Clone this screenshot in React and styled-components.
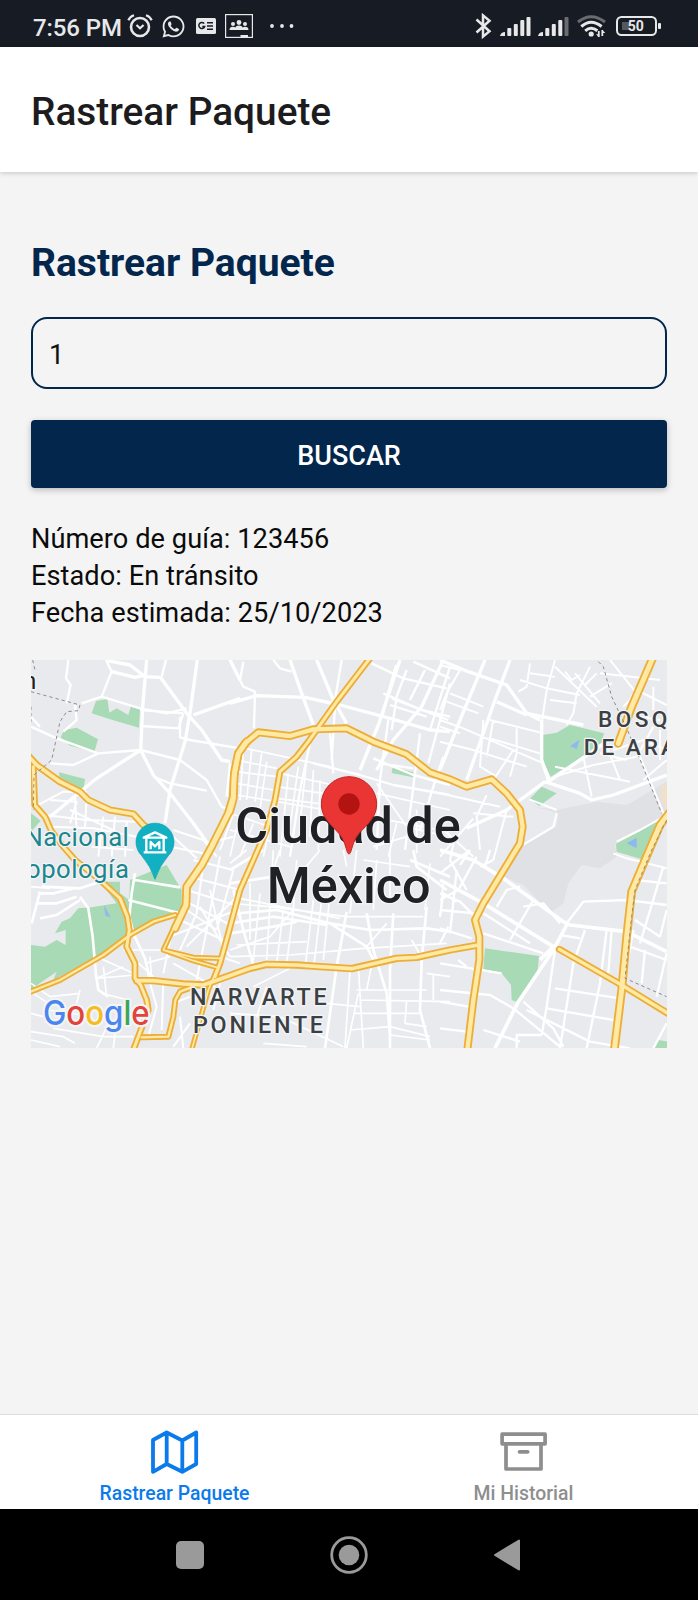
import React from 'react';
import styled, { createGlobalStyle } from 'styled-components';
import { FaWhatsapp } from 'react-icons/fa';

const GlobalStyle = createGlobalStyle`
  *, *::before, *::after { box-sizing: border-box; }
  body { margin: 0; background: #f4f4f4; font-family: Roboto, "Liberation Sans", sans-serif; }
`;

const Screen = styled.div`
  display: flex;
  flex-direction: column;
  width: 698px;
  height: 1600px;
  overflow: hidden;
  background: #f4f4f4;
`;

const StatusBar = styled.div`
  flex: none;
  display: flex;
  justify-content: space-between;
  height: 47px;
  padding: 5px 37px 0 33px;
  background: #171b23;
  color: #e6e8ea;
`;

const StatusGroup = styled.div`
  display: flex;
  align-items: center;
  height: 42px;
`;

const StatusItem = styled.div`
  display: flex;
  flex: none;
  margin-left: ${(p) => p.$gap || 0}px;
  svg { display: block; }
`;

const Clock = styled.span`
  width: 90px;
  font-size: 24px;
  letter-spacing: -0.1px;
  font-weight: 500;
  line-height: 42px;
  white-space: nowrap;
  padding-top: 3px;
`;

const Header = styled.header`
  flex: none;
  display: flex;
  align-items: center;
  height: 125px;
  padding: 5px 31px 0;
  background: #fff;
  box-shadow: 0 1px 5px rgba(0, 0, 0, 0.2);
`;

const HeaderTitle = styled.h1`
  margin: 0;
  font-size: 38.8px;
  font-weight: 500;
  line-height: 46px;
  color: #1c1c1e;
`;

const Content = styled.main`
  flex: 1;
  display: flex;
  flex-direction: column;
  padding: 68px 31px 0;
`;

const SectionTitle = styled.h2`
  margin: 0 0 31px;
  font-size: 39px;
  font-weight: 700;
  line-height: 46px;
  color: #03264c;
`;

const Input = styled.input`
  height: 72px;
  padding: 4px 16px 0;
  border: 2px solid #03264c;
  border-radius: 16px;
  outline: none;
  background: transparent;
  color: #111;
  font: 400 27px Roboto, sans-serif;
`;

const SearchButton = styled.button`
  height: 68px;
  margin-top: 31px;
  padding: 3px 0 0;
  border: 0;
  border-radius: 4px;
  background: #03264c;
  color: #fff;
  font: 500 27px Roboto, sans-serif;
  box-shadow: 0 2px 6px rgba(0, 0, 0, 0.24);
`;

const Details = styled.div`
  margin: 33px 0 29px;
`;

const Detail = styled.p`
  margin: 0;
  font-size: 27.2px;
  letter-spacing: 0.05px;
  line-height: 36.8px;
  color: #0b0b0b;
`;

const MapCard = styled.div`
  width: 636px;
  height: 388px;
  overflow: hidden;
  background: #e8eaed;
  svg { display: block; }
`;

const TabBar = styled.nav`
  flex: none;
  display: flex;
  height: 95px;
  border-top: 1px solid #dedede;
  background: #fff;
`;

const Tab = styled.div`
  flex: 1;
  display: flex;
  flex-direction: column;
  align-items: center;
  padding-top: 15px;
  color: ${(p) => (p.$active ? '#0b7aeb' : '#8e8e8f')};
  svg { display: block; }
`;

const TabLabel = styled.span`
  margin-top: 8px;
  font-size: 19.4px;
  font-weight: 500;
  line-height: 24px;
`;

const NavBar = styled.div`
  flex: none;
  display: grid;
  grid-template-columns: 28px 38px 28px;
  justify-content: center;
  align-items: center;
  column-gap: 126px;
  height: 91px;
  background: #000;
  svg { display: block; }
`;

const AlarmIcon = () => (
  <svg width="26" height="24" viewBox="0 0 26 24" fill="none" stroke="currentColor">
    <circle cx="13" cy="13" r="9" strokeWidth="2.6" />
    <path d="M9.5 11l3.5 3.2 3.6-3.2" strokeWidth="2.2" />
    <path d="M1.3 6.3Q3 2.5 7 1.3M24.7 6.3Q23 2.5 19 1.3" strokeWidth="2.2" />
  </svg>
);

const NewsIcon = () => (
  <svg width="20" height="16" viewBox="0 0 20 16">
    <rect width="20" height="16" rx="1.5" fill="currentColor" />
    <path d="M8.2 5.6A3 3 0 1 0 8.7 8.4H6.3" fill="none" stroke="#171b23" strokeWidth="1.5" />
    <path d="M11 4.8h6M11 8h6M11 11.2h6" stroke="#171b23" strokeWidth="1.4" />
  </svg>
);

const MeetingIcon = () => (
  <svg width="28" height="24" viewBox="0 0 28 24" fill="currentColor">
    <rect x=".6" y=".6" width="26.8" height="22.8" fill="none" stroke="currentColor" strokeWidth="1.2" />
    <circle cx="8" cy="10" r="2" /><circle cx="14" cy="8.5" r="2.4" /><circle cx="20" cy="10" r="2" />
    <path d="M4.5 16q0-3.3 3.6-3.3 1.5 0 2 .7 1.1-1.8 3.9-1.8t3.9 1.8q.6-.7 2-.7 3.6 0 3.6 3.3zM15.5 21h7.5v2h-7.5z" />
  </svg>
);

const DotsIcon = () => (
  <svg width="26" height="6" viewBox="0 0 26 6" fill="currentColor">
    <circle cx="3" cy="3" r="1.9" /><circle cx="13" cy="3" r="1.9" /><circle cx="22.5" cy="3" r="1.9" />
  </svg>
);

const BluetoothIcon = () => (
  <svg width="17" height="26" viewBox="0 0 17 26" fill="none" stroke="currentColor" strokeWidth="2.5">
    <path d="M1.5 6.5L14.5 18.3 8 23.6V2.4l6.5 5.3L1.5 19.5" />
  </svg>
);

const SignalIcon = ({ weak }) => (
  <svg width="31" height="21" viewBox="0 0 31 21" fill="currentColor">
    <path d="M0 20q1-4 5-4v4z" />
    <rect x="7.3" y="12" width="4" height="8" rx="1" />
    <rect x="13.8" y="8" width="4" height="12" rx="1" />
    <rect x="20.3" y="4" width="4" height="16" rx="1" />
    <rect x="26.5" y="1" width="4" height="19" rx="1" opacity={weak ? 0.4 : 1} />
  </svg>
);

const WifiIcon = () => (
  <svg width="29" height="23" viewBox="0 0 29 23" fill="none" stroke="currentColor">
    <path d="M1 7Q14 -3.5 28 7" strokeWidth="3" opacity=".4" />
    <path d="M4.3 11.5Q14 3 24.6 11.5" strokeWidth="3" />
    <path d="M8.2 15.8Q14 10.8 20.4 15.8" strokeWidth="3" />
    <circle cx="14.2" cy="19" r="2.6" fill="currentColor" stroke="none" />
    <path d="M21.8 16v6M25.3 15v6" strokeWidth="1.8" />
    <path d="M19 19.2l2.8 3v-3zM25.3 18v-3l3 3z" fill="currentColor" stroke="none" />
  </svg>
);

const BatteryIcon = () => (
  <svg width="45" height="20" viewBox="0 0 45 20">
    <rect x="1" y="1" width="39" height="18" rx="4.5" fill="none" stroke="currentColor" strokeWidth="2" />
    <rect x="42" y="7" width="3" height="6" rx="1" fill="currentColor" />
    <rect x="6" y="6" width="8" height="8" fill="currentColor" opacity=".3" />
    <text x="19.8" y="15" textAnchor="middle" fontFamily="Roboto" fontWeight="700" fontSize="14" fill="currentColor">50</text>
  </svg>
);

const MapIcon = () => (
  <svg width="48" height="44" viewBox="0 0 48 44" fill="none" stroke="currentColor" strokeWidth="3.8" strokeLinejoin="round">
    <path d="M2 10L15.7 2.5 31.3 10.5 45.2 2.5V34L31.3 41.8 15.7 34 2 41.8zM15.7 2.5V34M31.3 10.5v31.3" />
  </svg>
);

const ArchiveIcon = () => (
  <svg width="48" height="44" viewBox="0 0 48 44" fill="none" stroke="currentColor" strokeWidth="3.7" strokeLinejoin="round">
    <path d="M2.1 4.2h43v9.6h-43zM6 13.8v25.2h35V13.8" />
    <path d="M19.5 21.8h8.2" strokeLinecap="round" />
  </svg>
);

/* Each sector holds its own local coordinates; `at` is its offset on the map. */
const NW = [-33, -30];
const SW = [-33, 570];
const N = [597, -30];
const S = [597, 570];
const NE = [1227, -30];
const SE = [1227, 570];

const place = (at) => `translate(${at[0]} ${at[1]})`;

const areas = [
  { at: NW, fill: '#a7dab5', d: 'M215 190L228 153 262 147 268 188 290 175 325 195 333 168 360 175 357 233 285 212zM122 262L133 240 170 233 234 268 223 306 150 287zM117 367L195 387 190 422 120 392zM33 490L62 512 33 545z' },
  { at: SW, fill: '#a7dab5', d: 'M33 285L75 290 110 270 137 285 137 240 105 250 125 215 150 205 175 175 215 172 290 160 240 95 300 95 300 130 328 150 330 90 440 45 485 120 485 185 350 250 230 320 100 390 110 365 33 418z' },
  { at: SW, fill: '#91b9f0', d: 'M252 165L272 202 256 197z' },
  { at: N, fill: '#a7dab5', d: 'M488 350L550 367 549 382 485 369z' },
  { at: NE, fill: '#e0e1e5', d: 'M280 470L350 480 470 455 560 465 680 395 680 490 525 585 530 620 480 655 425 645 385 700 370 760 330 790 250 705 190 680 245 590 350 530 355 488z' },
  { at: NE, fill: '#a7dab5', d: 'M307 255L350 248 390 225 492 250 485 278 430 318 330 382 308 330zM268 448L305 410 350 430 298 468zM528 582L650 515 605 628 530 605z' },
  { at: NE, fill: '#8fb8f2', d: 'M390 288L418 270 410 297zM560 580L590 563 590 595z' },
  { at: NE, fill: '#efe1cb', d: 'M682 400L662 410 662 450 682 485z' },
  { at: SE, fill: '#a7dab5', d: 'M135 295L297 318 293 360 236 458 215 450 213 405 185 370 130 357zM655 570L682 575V595H642z' },
];

const streets = [
  { at: NW, w: 10, d: 'M380 30L368 170 362 300M420 80L500 190 545 240 605 330 630 335M520 195L660 145M532 30L510 190 495 275 450 420 435 520M262 32L330 45 375 80 420 82M275 65L345 82 378 75M362 300L400 375 450 430 520 520 570 590M362 300L230 385 90 500M630 30L660 90' },
  { at: NW, w: 7, d: 'M145 30L138 85 152 105 140 160M258 30L275 65 245 140M438 30L425 80M33 230L110 265 235 310 362 300M185 160L245 140 360 175 440 190 500 175M362 180L490 190M362 228L475 235 490 190M480 200L480 262 510 270 660 295M90 340L160 345 235 310M362 300L480 330 560 390 605 470 640 485M400 380L450 400 560 422M33 200L60 230M165 165L170 210 130 245M630 340L620 440' },
  { at: NW, w: 6, d: 'M45 470L130 425 200 425M90 450L170 455 150 520M165 440L170 540M200 440L195 535M75 495L200 510 350 515M90 530L220 535 350 560M250 500L235 620M285 500L275 620M320 515L315 620M150 480L300 550M215 590L340 600M460 540L550 570 590 620M460 560L530 625M450 590L550 610M560 580L640 560M640 490L600 600' },
  { at: SW, w: 8, d: 'M60 125L35 220M65 110L180 115 240 95M50 160L110 160 170 140M60 130L100 130 160 115M60 205L110 195 180 150M180 140L205 175 218 260 228 375 235 420 265 440M345 70L335 130 328 200 340 250 375 325 390 390M345 90L480 112M325 150L480 190' },
  { at: SW, w: 5, d: 'M33 110L90 115M33 400L90 440 180 430M40 430L85 460 120 455M85 480L185 495M33 490L70 500M33 545L130 560 165 580M33 570L120 590M100 535L250 560 340 560M230 385L310 350M230 385L345 375M250 350L260 440M230 320L340 370M265 520L230 595M290 510L280 595M245 430L325 450M180 420L170 460M310 300L430 300M375 340L450 320M345 330L400 380M390 320L395 390' },
  { at: SW, w: 6, d: 'M520 30L640 60M510 80L660 120M500 120L660 170M490 150L640 230M480 210L610 270M550 40L530 190 480 300M600 20L560 240 530 390M640 60L590 240M570 120L610 300M660 130L500 290M650 180L450 260M500 180L590 240M540 170L630 320M455 250L430 370M460 340L600 420M600 320L660 340M600 400L580 480M460 460L510 440M480 500L490 595M390 400L410 470 385 560M430 390L425 540M510 520L460 590' },
  { at: N, w: 10, d: 'M0 160L80 137 225 142 330 165 480 205 600 240 660 245M180 30L215 130 250 225M260 30L310 150 350 220M510 30L445 225 390 360M640 30L575 170 490 270 440 360M500 45L455 200' },
  { at: N, w: 7, d: 'M0 30L40 110 75 125 72 235M40 35L30 90M130 30L150 55 185 65M335 30L315 150M315 170L305 330M425 40L520 85 650 115M550 35L660 85M460 130L575 180 660 200M485 145L655 210M480 165L590 200M530 60L500 140 485 240M585 60L540 150M660 50L600 240M660 100L595 340M430 325L550 375 660 405M450 340L550 355M475 210L450 390 440 600M570 250L545 450 525 600M640 320L610 410 570 540M250 340L390 375 490 405 660 435M240 280L210 420 180 620M300 250L310 370' },
  { at: N, w: 5, d: 'M25 290L230 335 300 350M20 330L140 355M20 365L140 380M20 400L130 420M20 435L290 480M40 300L30 450M65 300L50 450M95 310L75 455M110 335L90 480M175 370L150 620M205 350L180 530M230 330L210 520M250 360L240 560M270 390L265 600M150 370L310 405M140 410L280 430M140 445L300 465M0 490L120 530M0 540L180 590M30 490L0 620M70 520L30 620M120 530L100 620M440 400L530 530 650 560M430 590L530 560M440 430L660 480M420 500L630 540M500 520L475 620M560 480L560 610' },
  { at: S, w: 8, d: 'M0 60L100 0M0 100L130 80M10 120L40 240 70 345M20 190L140 180 300 220 420 240 590 235 660 245M0 220L130 200 290 225M0 250L130 230 200 215M350 185L320 350 285 595M590 170L575 330 570 480 600 595M490 190L480 360 480 595M410 190L430 300 470 430 480 560M300 220L410 290 430 330M540 30L660 80M550 0L560 50 650 120' },
  { at: S, w: 5, d: 'M0 160L120 170 350 200 580 200M30 145L330 205M0 320L180 315 400 295 650 280M20 285L230 275M130 0L110 330M200 30L190 180 170 340M250 150L225 355M275 150L250 360M300 130L280 330M60 100L60 270M90 130L70 330M160 180L140 340M380 0L360 190M340 0L350 50M440 30L430 180M480 0L480 160M400 30L540 50M600 40L585 180M640 100L630 200M385 350L400 595M360 360L345 595M385 430L350 595M380 420L590 420M390 450L660 455M370 490L570 490M360 540L480 530 600 560M480 555L600 570M290 460L390 470M0 490L150 500 340 590M100 580L230 590M70 410L180 355M530 450L525 520 590 530M610 370L610 450M590 370L660 380M545 270L580 330M410 290L470 220M430 320L410 420M110 410L80 500M0 300L120 260 190 180M0 40L50 0M270 0L220 60M150 0L130 60' },
  { at: NE, w: 10, d: 'M0 30L85 65 200 105 260 190 300 210M260 190L430 225M135 30L60 210 0 360M210 30L165 150 80 390M170 155L260 195M315 395L420 430 455 450 520 435 680 375M325 395L420 330 500 275M315 395L200 480 80 535M305 210L305 330 325 390' },
  { at: NE, w: 6, d: 'M0 45L60 60 20 130 0 180M30 130L130 170M20 155L115 190M0 210L70 235 310 340 330 385M0 230L60 250M0 275L100 300 260 350M150 210L310 250M345 30L320 120 305 220M270 40L260 110 235 125M240 90L320 115 420 135M345 50L470 170M345 80L270 70M420 75L395 90 375 65M330 150L410 160M405 70L480 160M450 50L410 130 400 190 380 225M470 70L435 105M510 30L590 130M480 70L660 90M515 100L450 140M600 95L570 150 550 170M640 110L640 180M590 120L680 165M600 200L660 210M130 210L120 350 170 380M160 210L140 320M230 235L230 310 210 380M150 265L300 310M220 300L160 390M345 380L460 345 590 320M500 290L540 390M430 320L455 440M345 350L570 395M480 310L560 330M350 480L268 448M520 300L610 270 680 300M600 320L675 500M610 390L680 330M640 230L590 320M660 240L660 330M350 490L340 530 240 590M200 480L160 630M140 435L110 500 120 600M0 430L180 470M100 490L220 500M100 505L0 620M530 575L600 540 680 495M520 610L560 625 680 655M0 530L100 620M45 560L30 630' },
  { at: SE, w: 11, d: 'M0 0L100 30 190 85 370 215 390 225 560 245 680 305M0 90L130 160 340 290M380 225L340 300 235 455 165 595M340 290L300 330' },
  { at: SE, w: 7, d: 'M0 180L105 190M0 235L95 265M0 130L60 155 105 200M0 70L90 0M0 150L55 120 110 20M30 30L80 120M50 60L30 250M0 340L185 370M0 420L150 435 220 475 360 590M0 455L85 470M0 535L80 545M130 540L240 575M380 220L430 155 560 150 680 165M360 255L420 265M435 240L400 340 360 595M500 240L480 400 440 595M515 240L505 370M345 415L540 445M320 475L520 510M345 300L320 470 305 555M250 455L340 535 370 590M260 480L450 575 570 595M305 555L230 555 230 595M585 90L680 100M670 50L600 280M585 210L660 260M680 180L660 260M580 240L560 350M570 290L680 330M615 300L605 400M680 310L650 440M170 170L200 120 240 110M280 150L210 270M130 190L270 280M130 250L310 310M250 170L310 160 360 220M680 520L640 595M0 200L10 130 50 155M55 330L80 350M160 30L120 50M25 230L0 280M150 0L135 50M90 0L60 45' },
];

const highways = [
  { at: NW, w: 22, d: 'M27 320L50 345 120 395 180 425 205 450 270 480 340 492 370 525 410 550' },
  { at: NW, w: 20, d: 'M40 350L44 465 75 500 95 545 130 590 165 630 240 690 300 745 322 800 328 840 320 890 345 940 345 985 362 1005 380 1050 385 1080 340 1200' },
  { at: NW, w: 26, d: 'M680 275L655 310 643 370 640 440 625 490 575 590 545 645 500 710 498 765 465 835' },
  { at: SW, w: 16, d: 'M465 225L430 300 520 332 590 352M430 300L520 322 600 325' },
  { at: N, w: 24, d: 'M0 485L10 450 12 380 25 310 45 280 85 247 180 258 250 238 350 235 430 275 530 313 600 368 660 388 710 410 785 388 830 430 870 480 878 530 870 580 815 670 760 760 735 810 748 860 748 930 730 1050 712 1200' },
  { at: N, w: 20, d: 'M422 22L320 155 265 232 235 275 200 320 150 365 135 450 110 540 70 630 30 720 -5 850 -30 940 -45 980' },
  { at: SW, w: 16, d: 'M590 360L565 420 515 600' },
  { at: SW, w: 18, d: 'M25 428L120 390 250 315 330 255 400 215 465 195' },
  { at: SW, w: 22, d: 'M350 392L400 392 490 402 550 405 620 380 690 355 740 343 830 345 900 350 995 356 1130 325 1190 322 1290 300 1375 285' },
  { at: SW, w: 18, d: 'M520 410L480 425 466 450 460 500 445 560 365 562' },
  { at: NE, w: 26, d: 'M640 20L575 170 535 280' },
  { at: NE, w: 26, d: 'M695 480L660 525 615 630 575 725 560 860 545 1020 523 1200' },
  { at: SE, w: 21, d: 'M358 298L545 405 700 500' },
];

const borders = [
  { at: NW, d: 'M38 30L45 60M33 125L180 165 175 182 140 185 120 215 95 330 42 375 40 480M33 170V215' },
  { at: NE, d: 'M475 35L490 50 515 140 560 235 605 340 665 490M680 510L635 600 585 720 575 800 555 985 680 1040' },
];

const Label = styled.text`
  font-family: Roboto, "Liberation Sans", sans-serif;
  font-weight: ${(p) => p.$weight || 500};
  font-size: ${(p) => p.$size}px;
  letter-spacing: ${(p) => p.$spacing || 0}px;
  fill: ${(p) => p.$color || '#202124'};
  stroke: #f3f4f6;
  stroke-width: 8px;
  stroke-linejoin: round;
  paint-order: stroke;
`;

const CityMap = () => (
  <svg width="636" height="388" viewBox="0 0 1908 1164" strokeLinejoin="round">
    <rect width="1908" height="1164" fill="#e8eaed" />
    {areas.map((a, i) => <path key={i} transform={place(a.at)} d={a.d} fill={a.fill} />)}
    <g fill="none" stroke="#fff">
      {streets.map((s, i) => <path key={i} transform={place(s.at)} d={s.d} strokeWidth={s.w} />)}
    </g>
    <g fill="none" stroke="#ecae38" strokeLinecap="round">
      {highways.map((h, i) => <path key={i} transform={place(h.at)} d={h.d} strokeWidth={h.w} />)}
    </g>
    <g fill="none" stroke="#ffe9a3" strokeLinecap="round">
      {highways.map((h, i) => <path key={i} transform={place(h.at)} d={h.d} strokeWidth={h.w - 11} />)}
    </g>
    <g fill="none" stroke="#8b8d92" strokeWidth="3" strokeDasharray="10 9">
      {borders.map((b, i) => <path key={i} transform={place(b.at)} d={b.d} />)}
    </g>

    <Label x="16" y="88" textAnchor="end" $size={74} $weight={400}>n</Label>
    <Label x="295" y="558" textAnchor="end" $size={77} $spacing={1.5} $weight={400} $color="#1b868e">Nacional</Label>
    <Label x="295" y="655" textAnchor="end" $size={77} $spacing={1.5} $weight={400} $color="#1b868e">opología</Label>
    <Label x="1701" y="202" textLength="208" $size={68} $color="#3c4043">BOSQ</Label>
    <Label x="1658" y="285" textLength="277" $size={68} $color="#3c4043">DE ARA</Label>
    <Label x="477" y="1035" textLength="410" $size={70} $color="#3c4043">NARVARTE</Label>
    <Label x="486" y="1118" textLength="390" $size={70} $color="#3c4043">PONIENTE</Label>
    <Label x="951" y="550" textAnchor="middle" $size={151}>Ciudad de</Label>
    <Label x="953" y="729" textAnchor="middle" $size={151}>México</Label>

    <path d="M372 658Q360 620 332 587A57 57 0 1 1 412 587Q384 620 372 658z" fill="#12b0c3" stroke="#0b9bad" strokeWidth="2" />
    <g fill="none" stroke="#fff" strokeWidth="7">
      <path d="M338 533L372 517 406 533zM346 536V574M398 536V574M338 577H406" />
      <path d="M359 568V546L372 559 385 546V568" />
    </g>

    <path d="M954 582C947 582 946 555 932 532C914 502 871 481 871 433A83 83 0 0 1 1037 433C1037 481 994 502 976 532C962 555 961 582 954 582z" fill="#ea3535" stroke="#c5221f" strokeWidth="3" />
    <circle cx="954" cy="432" r="32" fill="#b31412" />

    <text x="36" y="1095" textLength="320" lengthAdjust="spacingAndGlyphs" fontFamily="Inter" fontWeight="500" fontSize="101" strokeWidth="14" stroke="#f3f4f6" paintOrder="stroke">
      <tspan fill="#4a86ee">G</tspan><tspan fill="#e2443a">o</tspan><tspan fill="#f5bd1f">o</tspan><tspan fill="#4a86ee">g</tspan><tspan fill="#3aa757">l</tspan><tspan fill="#e2443a">e</tspan>
    </text>
  </svg>
);

export default function App() {
  return (
    <>
      <GlobalStyle />
      <Screen>
        <StatusBar>
          <StatusGroup>
            <Clock>7:56 PM</Clock>
            <StatusItem $gap={4}><AlarmIcon /></StatusItem>
            <StatusItem $gap={8}><FaWhatsapp size={25} /></StatusItem>
            <StatusItem $gap={10}><NewsIcon /></StatusItem>
            <StatusItem $gap={9}><MeetingIcon /></StatusItem>
            <StatusItem $gap={16}><DotsIcon /></StatusItem>
          </StatusGroup>
          <StatusGroup>
            <BluetoothIcon />
            <StatusItem $gap={8}><SignalIcon /></StatusItem>
            <StatusItem $gap={7}><SignalIcon weak /></StatusItem>
            <StatusItem $gap={8}><WifiIcon /></StatusItem>
            <StatusItem $gap={10}><BatteryIcon /></StatusItem>
          </StatusGroup>
        </StatusBar>
        <Header><HeaderTitle>Rastrear Paquete</HeaderTitle></Header>
        <Content>
          <SectionTitle>Rastrear Paquete</SectionTitle>
          <Input defaultValue="1" aria-label="Número de guía" />
          <SearchButton type="button">BUSCAR</SearchButton>
          <Details>
            <Detail>Número de guía: 123456</Detail>
            <Detail>Estado: En tránsito</Detail>
            <Detail>Fecha estimada: 25/10/2023</Detail>
          </Details>
          <MapCard><CityMap /></MapCard>
        </Content>
        <TabBar>
          <Tab $active><MapIcon /><TabLabel>Rastrear Paquete</TabLabel></Tab>
          <Tab><ArchiveIcon /><TabLabel>Mi Historial</TabLabel></Tab>
        </TabBar>
        <NavBar>
          <svg width="28" height="28" viewBox="0 0 28 28"><rect width="28" height="28" rx="5" fill="#9a9a9a" /></svg>
          <svg width="38" height="38" viewBox="0 0 38 38">
            <circle cx="19" cy="19" r="17.3" fill="none" stroke="#9a9a9a" strokeWidth="2.8" />
            <circle cx="19" cy="19" r="10.3" fill="#9a9a9a" />
          </svg>
          <svg width="28" height="32" viewBox="0 0 28 32"><path d="M25 1.5v29L1 16z" fill="#9a9a9a" stroke="#9a9a9a" strokeWidth="2" strokeLinejoin="round" /></svg>
        </NavBar>
      </Screen>
    </>
  );
}
